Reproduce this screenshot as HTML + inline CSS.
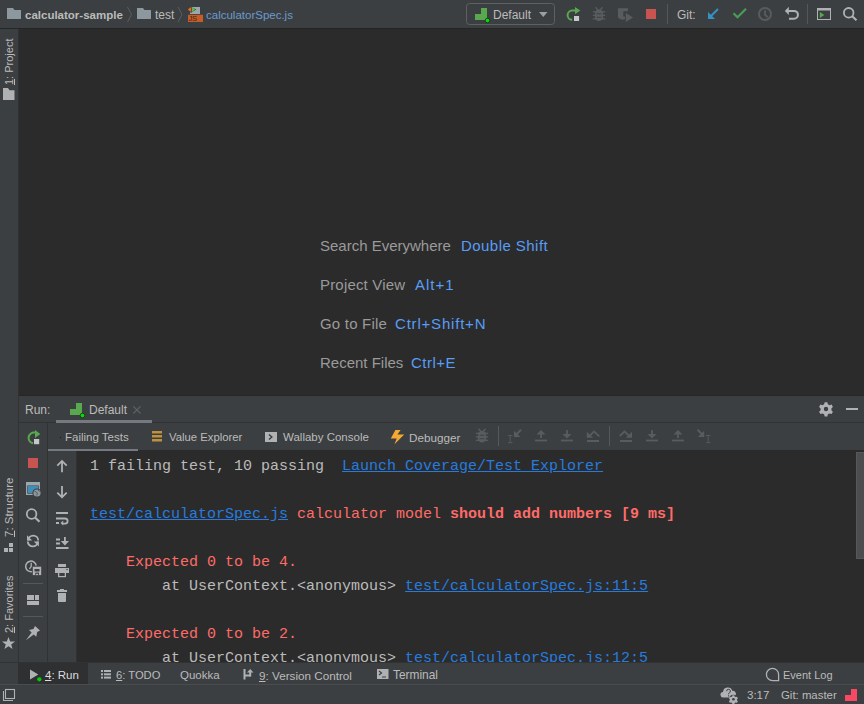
<!DOCTYPE html>
<html><head><meta charset="utf-8">
<style>
*{margin:0;padding:0;box-sizing:border-box}
html,body{width:864px;height:704px;overflow:hidden;background:#3C3F41}
body{position:relative;font-family:"Liberation Sans",sans-serif;color:#BBBBBB}
.a{position:absolute}
.t{position:absolute;white-space:pre;line-height:1;font-size:12px}
.m{position:absolute;white-space:pre;font-family:"Liberation Mono",monospace;font-size:15px;line-height:24px}
svg{position:absolute;overflow:visible}
</style></head><body>

<!-- ===== top nav bar ===== -->

<div class="a" style="left:0;top:0;width:864px;height:28px;background:#3C3F41"></div>
<div class="a" style="left:0;top:28px;width:864px;height:1px;background:#252525"></div>

<!-- ===== left stripe ===== -->
<div class="a" style="left:0;top:29px;width:18px;height:634px;background:#3C3F41"></div>
<div class="a" style="left:18px;top:29px;width:1px;height:634px;background:#323232"></div>

<!-- ===== editor ===== -->
<div class="a" style="left:19px;top:29px;width:845px;height:367px;background:#2B2B2B"></div>

<!-- ===== run header ===== -->
<div class="a" style="left:19px;top:395px;width:845px;height:1px;background:#262626"></div>
<div class="a" style="left:19px;top:396px;width:845px;height:26px;background:#3C3F41"></div>
<div class="a" style="left:19px;top:422px;width:845px;height:1px;background:#323232"></div>

<!-- ===== run tool columns ===== -->
<div class="a" style="left:47px;top:423px;width:1px;height:240px;background:#323232"></div>
<div class="a" style="left:48px;top:450px;width:28px;height:213px;background:#3C3F41"></div>
<div class="a" style="left:76px;top:450px;width:1px;height:213px;background:#323232"></div>
<div class="a" style="left:77px;top:450px;width:787px;height:213px;background:#2B2B2B"></div>

<!-- ===== bottom tool bar ===== -->
<!--BOTTOM-->
<!-- ===== CONTENT ===== -->
<!-- folder 1 -->
<svg style="left:0;top:0" width="864" height="28">
<path d="M7 8h6l1.5 2H21v9H7z" fill="#8C979E"/>
<path d="M127.5 7L131.5 14.5L127.5 22" fill="none" stroke="#5A5D60" stroke-width="1"/>
<path d="M137 8h6l1.5 2H151v9H137z" fill="#8C979E"/>
<path d="M178 7L182 14.5L178 22" fill="none" stroke="#5A5D60" stroke-width="1"/>
<!-- js icon -->
<rect x="192" y="7" width="8" height="7" fill="#9AA7B0"/>
<rect x="190" y="12.5" width="3" height="1.5" fill="#9AA7B0"/>
<path d="M191.6 7.3L196.3 9.5L191.6 12.2z" fill="#3C3F41"/>
<path d="M191.1 6.9L187.8 9.5L191.1 12z" fill="#F26522"/>
<path d="M191.8 6.9L195.3 9.5L191.8 12z" fill="#59C13F"/>
<rect x="188" y="14.8" width="15" height="7.2" fill="#C65D27"/>
<!-- combobox -->
<rect x="466.5" y="3.5" width="88" height="21" rx="3" fill="none" stroke="#5E6061"/>
<path d="M481 8h6v12h-12v-6h6z" fill="#59A84F"/>
<circle cx="487.5" cy="20.5" r="2.3" fill="#00E000" stroke="#1F2A1F" stroke-width="0.8"/>
<path d="M539 12h8.5l-4.25 5z" fill="#9C9EA0"/>
<!-- rerun -->
<path d="M575.5 10.6H572.2A4.5 4.5 0 0 0 572.2 19.8" fill="none" stroke="#59A84F" stroke-width="2"/>
<path d="M575 7L580.3 10.6L575 14.3z" fill="#59A84F"/>
<rect x="573.3" y="15.3" width="6.4" height="6.4" fill="#3C3F41"/>
<rect x="574" y="16" width="5.1" height="5" fill="#C5C7C9"/>
<!-- bug disabled -->
<g fill="#595C5E">
<path d="M599 9.3c2.6 0 4.2 1.9 4.2 5.4v1.8c0 2.8-1.8 4.5-4.2 4.5s-4.2-1.7-4.2-4.5v-1.8c0-3.5 1.6-5.4 4.2-5.4z"/>
<rect x="592.8" y="11.2" width="12.4" height="1.3"/>
<rect x="592.8" y="14.7" width="12.4" height="1.3"/>
<rect x="592.8" y="18.2" width="12.4" height="1.3"/>
<path d="M595.5 7.3l2.2 2.4M602.5 7.3l-2.2 2.4" stroke="#595C5E" stroke-width="1.3"/>
<rect x="596.5" y="13.3" width="5" height="0.9" fill="#3C3F41"/>
<rect x="596.5" y="16.8" width="5" height="0.9" fill="#3C3F41"/>
</g>
<!-- coverage disabled -->
<path d="M618 8.3H628V11.3H623.3V16.5H625V19Q622 21 618 17.5Z" fill="#595C5E"/>
<path d="M625.8 12.9L633 17.5L625.8 22.1Z" fill="#595C5E"/>
<!-- stop -->
<rect x="646" y="9" width="10" height="10" fill="#C75450"/>
<rect x="667" y="4" width="1" height="20" fill="#55585A"/>
<!-- git update arrow -->
<path d="M718 9L711 16" stroke="#3592C4" stroke-width="2"/>
<path d="M708 12V19H715z" fill="#3592C4"/>
<!-- check -->
<path d="M733.5 13.2L737.5 17.2L746 8.8" fill="none" stroke="#499C54" stroke-width="2.2"/>
<!-- clock -->
<circle cx="765" cy="14" r="6" fill="none" stroke="#595C5E" stroke-width="2"/>
<path d="M765 10.3v4.4l2.7 2.4" fill="none" stroke="#595C5E" stroke-width="1.9"/>
<!-- undo -->
<path d="M788 10.9H794A3.95 3.95 0 0 1 794 18.8H789" fill="none" stroke="#AFB1B3" stroke-width="2"/>
<path d="M784.8 10.9L788.8 6.8V15z" fill="#AFB1B3"/>
<rect x="807" y="4" width="1" height="20" fill="#55585A"/>
<!-- run window -->
<rect x="817.5" y="8.5" width="13" height="11" fill="none" stroke="#AFB1B3"/>
<rect x="817" y="8" width="14" height="2.5" fill="#AFB1B3"/>
<path d="M819.8 12.1V17.9L824.3 15z" fill="#59A84F"/>
<!-- search -->
<circle cx="848.7" cy="12.8" r="4.8" fill="none" stroke="#AFB1B3" stroke-width="1.8"/>
<path d="M852.2 16.3l4.3 4" stroke="#AFB1B3" stroke-width="2.2"/>
</svg>
<div class="t" style="left:25px;top:10px;font-size:11.5px;font-weight:bold">calculator-sample</div>
<div class="t" style="left:155px;top:9px">test</div>
<div class="t" style="left:206px;top:10px;font-size:11.5px;color:#6A9BCF">calculatorSpec.js</div>
<div class="t" style="left:188.6px;top:15px;font-size:7.5px;color:#3A2A1E;letter-spacing:-0.3px">JS</div>
<div class="t" style="left:493px;top:9px">Default</div>
<div class="t" style="left:677px;top:9px">Git:</div>

<div class="t" style="left:4px;top:85px;font-size:11px;transform:rotate(-90deg);transform-origin:0 0"><u>1</u>: Project</div>
<div class="t" style="left:3.5px;top:537px;font-size:11.5px;transform:rotate(-90deg);transform-origin:0 0"><u>7</u>: Structure</div>
<div class="t" style="left:3.5px;top:633px;font-size:11px;transform:rotate(-90deg);transform-origin:0 0"><u>2</u>: Favorites</div>
<svg style="left:0;top:0" width="19" height="704">
<path d="M3 88h5l1.5 2.2H14.5V100H3z" fill="#AFB1B3"/>
<rect x="9" y="543" width="4" height="4" fill="#AFB1B3"/>
<rect x="4" y="548" width="4" height="4" fill="#AFB1B3"/>
<rect x="9" y="548" width="4" height="4" fill="#AFB1B3"/>
<path d="M8.5 637L10.2 641.5H15L11.2 644.5L12.6 649L8.5 646.2L4.4 649L5.8 644.5L2 641.5H6.8z" fill="#AFB1B3"/>
</svg>

<div class="t" style="left:320px;top:238px;font-size:15px;color:#9A9A9A">Search Everywhere</div>
<div class="t" style="left:461px;top:238px;font-size:15px;color:#589DF6;letter-spacing:0.45px">Double Shift</div>
<div class="t" style="left:320px;top:277px;font-size:15px;color:#9A9A9A;letter-spacing:0.18px">Project View</div>
<div class="t" style="left:415px;top:277px;font-size:15px;color:#589DF6;letter-spacing:1px">Alt+1</div>
<div class="t" style="left:320px;top:316px;font-size:15px;color:#9A9A9A;letter-spacing:0.2px">Go to File</div>
<div class="t" style="left:395px;top:316px;font-size:15px;color:#589DF6;letter-spacing:0.8px">Ctrl+Shift+N</div>
<div class="t" style="left:320px;top:355px;font-size:15px;color:#9A9A9A">Recent Files</div>
<div class="t" style="left:411px;top:355px;font-size:15px;color:#589DF6;letter-spacing:0.5px">Ctrl+E</div>

<div class="t" style="left:25px;top:404px">Run:</div>
<svg style="left:0;top:0" width="864" height="704">
<path d="M76 403h6v12h-12v-6h6z" fill="#59A84F"/>
<circle cx="82.5" cy="415.5" r="2.3" fill="#00E000" stroke="#1F2A1F" stroke-width="0.8"/>
<path d="M133.3 406.3l7.2 7.2M140.5 406.3l-7.2 7.2" stroke="#5E6163" stroke-width="1.2"/>
<rect x="56" y="420" width="96" height="3" fill="#747A80"/>
<!-- gear -->
<g transform="translate(826 409)">
<path fill="#AFB1B3" d="M-1.3 -6.8h2.6l0.6 2.1 1.6 0.9 2.1-0.6 1.3 2.3-1.5 1.5v1.8l1.5 1.5-1.3 2.3-2.1-0.6-1.6 0.9-0.6 2.1h-2.6l-0.6-2.1-1.6-0.9-2.1 0.6-1.3-2.3 1.5-1.5v-1.8l-1.5-1.5 1.3-2.3 2.1 0.6 1.6-0.9z"/>
<circle r="2.2" fill="#3C3F41"/>
</g>
<rect x="846" y="408" width="12" height="2" fill="#AFB1B3"/>
</svg>
<div class="t" style="left:89px;top:404px">Default</div>
<!-- tab row -->
<div class="a" style="left:48px;top:449px;width:90px;height:2px;background:#747A80"></div>
<div class="t" style="left:65px;top:432px;font-size:11.5px">Failing Tests</div>
<div class="a" style="left:60px;top:437px;width:1px;height:1px;background:#1A1A1A"></div>
<svg style="left:0;top:0" width="864" height="704">
<rect x="152" y="431" width="10" height="2.5" fill="#BE913C"/>
<rect x="152" y="435" width="10" height="2.5" fill="#BE913C"/>
<rect x="152" y="439" width="10" height="2.5" fill="#BE913C"/>
<rect x="265" y="432" width="12" height="10" fill="#AFB1B3"/>
<path d="M269 434.5l2.8 2.5-2.8 2.5" fill="none" stroke="#3C3F41" stroke-width="1.5"/>
<path d="M395.4 430H400.6L397.5 434.6H404.2L394.5 444.3L396.7 438.6H390.8z" fill="#F4A934"/>
<g fill="#595C5E" transform="translate(-117 421.5)">
<path d="M599 9.3c2.6 0 4.2 1.9 4.2 5.4v1.8c0 2.8-1.8 4.5-4.2 4.5s-4.2-1.7-4.2-4.5v-1.8c0-3.5 1.6-5.4 4.2-5.4z"/>
<rect x="592.8" y="11.2" width="12.4" height="1.3"/>
<rect x="592.8" y="14.7" width="12.4" height="1.3"/>
<rect x="592.8" y="18.2" width="12.4" height="1.3"/>
<path d="M595.5 7.3l2.2 2.4M602.5 7.3l-2.2 2.4" stroke="#595C5E" stroke-width="1.3"/>
<rect x="596.5" y="13.3" width="5" height="0.9" fill="#3C3F41"/>
<rect x="596.5" y="16.8" width="5" height="0.9" fill="#3C3F41"/>
</g>
<rect x="498" y="426" width="1" height="20" fill="#55585A"/>
<rect x="609" y="426" width="1" height="20" fill="#55585A"/>
<g fill="#595C5E" stroke="#595C5E">
<!-- arrow to cursor left -->
<path d="M521 429.8l-5 5" stroke-width="2" fill="none"/>
<path d="M514 430.8v6.3h6.3z" stroke="none"/>
<path d="M508 435.5h4.5M510.2 435.5v7.2M508 442.7h4.5" stroke-width="0.9" fill="none"/>
<!-- upload -->
<path d="M535 440.5h12" stroke-width="1.8"/>
<path d="M541 438v-7" stroke-width="1.8"/>
<path d="M536.5 434.5l4.5-4.5 4.5 4.5z" stroke="none"/>
<!-- download -->
<path d="M561 440.5h12" stroke-width="1.8"/>
<path d="M567 430v7" stroke-width="1.8"/>
<path d="M562.5 434l4.5 4.5 4.5-4.5z" stroke="none"/>
<!-- return up -->
<path d="M587 441h12" stroke-width="2"/>
<path d="M589.5 436l4.5-4.6 5.3 5" stroke-width="1.8" fill="none"/>
<path d="M586.8 431.7v6h6.2z" stroke="none"/>
<!-- return down -->
<path d="M620 441h12" stroke-width="2"/>
<path d="M619.8 436l4.8-4.6 5 5" stroke-width="1.8" fill="none"/>
<path d="M632 431.7v6h-6.2z" stroke="none"/>
<!-- download 2 -->
<path d="M646 440.5h12" stroke-width="1.8"/>
<path d="M652 430v7" stroke-width="1.8"/>
<path d="M647.5 434l4.5 4.5 4.5-4.5z" stroke="none"/>
<!-- upload 2 -->
<path d="M672 440.5h12" stroke-width="1.8"/>
<path d="M678 438v-7" stroke-width="1.8"/>
<path d="M673.5 434.5l4.5-4.5 4.5 4.5z" stroke="none"/>
<!-- arrow to cursor right -->
<path d="M697.5 429.8l5 5" stroke-width="2" fill="none"/>
<path d="M704.2 430.8v6.3h-6.3z" stroke="none"/>
<path d="M706 435.5h4.5M708.2 435.5v7.2M706 442.7h4.5" stroke-width="0.9" fill="none"/>
</g>
</svg>
<div class="t" style="left:169px;top:432px;font-size:11.3px">Value Explorer</div>
<div class="t" style="left:283px;top:432px;font-size:11.5px">Wallaby Console</div>
<div class="t" style="left:409px;top:432px;font-size:11.7px">Debugger</div>

<svg style="left:0;top:0" width="864" height="704">
<!-- col1 -->
<path d="M35 432.6A5.3 5.3 0 1 0 33 443.3" fill="none" stroke="#59A84F" stroke-width="2"/>
<path d="M35 430l5.3 4-5.3 4z" fill="#59A84F"/>
<rect x="34" y="439" width="5.2" height="5.2" fill="#C5C7C9"/>
<rect x="28" y="458" width="10" height="10" fill="#C75450"/>
<!-- screen globe -->
<rect x="26" y="482" width="14" height="13" fill="#9AA7B0"/>
<rect x="27.3" y="485.5" width="11.4" height="8.2" fill="#3C3F41"/>
<rect x="28" y="486" width="10" height="7" fill="#3D8FB8"/>
<circle cx="37" cy="493" r="4.6" fill="#3C3F41"/>
<circle cx="37" cy="493" r="3.6" fill="#8C969C"/>
<path d="M34.5 491.5l2 0.5 1 2-1.2 1.5M38 490l1.5 1.5" stroke="#4A4F52" stroke-width="0.8" fill="none"/>
<!-- search -->
<circle cx="31.6" cy="514" r="4.8" fill="none" stroke="#AFB1B3" stroke-width="1.8"/>
<path d="M35 517.5l4.5 4.2" stroke="#AFB1B3" stroke-width="2.2"/>
<!-- refresh -->
<path d="M28.3 540.5A4.95 4.95 0 0 1 38.2 540.5" fill="none" stroke="#AFB1B3" stroke-width="1.8"/>
<path d="M27 535.2V540.4H32.2z" fill="#AFB1B3"/>
<path d="M37.7 541.5A4.95 4.95 0 0 1 27.8 541.5" fill="none" stroke="#AFB1B3" stroke-width="1.8"/>
<path d="M38.9 546.6V541.4H33.7z" fill="#AFB1B3"/>
<!-- clock save -->
<path d="M36.2 565.5A5.3 5.3 0 1 0 31.92 571.62" fill="none" stroke="#AFB1B3" stroke-width="1.5"/>
<path d="M31.2 562.8V566.6L29.4 568.8" fill="none" stroke="#AFB1B3" stroke-width="1.3"/>
<rect x="32.8" y="566.7" width="8.4" height="8.4" fill="#AFB1B3"/>
<rect x="34.5" y="569" width="5" height="2.5" fill="#3C3F41"/>
<rect x="35.3" y="572.6" width="3.7" height="2.6" fill="#3C3F41"/>
<rect x="36.1" y="573.8" width="2.1" height="1.3" fill="#AFB1B3"/>
<rect x="23" y="583" width="20" height="1" fill="#555759"/>
<!-- layout -->
<rect x="27" y="595" width="7" height="5" fill="#AFB1B3"/>
<rect x="35" y="595" width="4" height="5" fill="#AFB1B3"/>
<rect x="27" y="601" width="12" height="4" fill="#AFB1B3"/>
<rect x="23" y="616" width="20" height="1" fill="#555759"/>
<!-- pin -->
<path d="M35 626l5 4.5-2.8 1.5-1 4.8-2.5-2.4L26 640.2l5.6-7.7-2.6-2.6 4.5-1z" fill="#AFB1B3"/>
<!-- col2 -->
<g stroke="#AFB1B3" fill="none" stroke-width="1.8">
<path d="M62 461v11.2M57.3 465.6l4.7-4.7 4.7 4.7"/>
<path d="M62 486v11.2M57.3 492.6l4.7 4.7 4.7-4.7"/>
</g>
<g fill="#AFB1B3">
<rect x="56" y="512" width="12" height="2"/>
<rect x="56" y="517.5" width="9" height="2"/>
<rect x="56" y="522" width="3" height="2"/>
<path d="M65 518.5a2.6 2.6 0 0 1 0 5.2h-2" fill="none" stroke="#AFB1B3" stroke-width="1.8"/>
<path d="M60.5 523l2.7-2.5v5z"/>
<rect x="56" y="538.5" width="4" height="2"/>
<rect x="56" y="542.5" width="4" height="2"/>
<rect x="56" y="547" width="12.5" height="2"/>
<rect x="64" y="537" width="1.8" height="6"/>
<path d="M60.8 541h8.2l-4.1 4.6z"/>
<!-- printer -->
<rect x="58" y="564" width="8" height="3"/>
<rect x="55" y="568" width="14" height="5"/>
<rect x="58" y="572" width="8" height="5.2"/>
<rect x="59.3" y="573" width="5.4" height="3" fill="#3C3F41"/>
<circle cx="67" cy="569.5" r="0.7" fill="#3C3F41"/>
<!-- trash -->
<rect x="57" y="590" width="10" height="2"/>
<rect x="60" y="589" width="4" height="1.5"/>
<path d="M58 593h8v8a1 1 0 0 1 -1 1h-6a1 1 0 0 1 -1 -1z"/>
</g>
</svg>

<div class="m" style="left:90px;top:455px;color:#BBBBBB">1 failing test, 10 passing  <u style="color:#287BDE">Launch Coverage/Test Explorer</u></div>
<div class="m" style="left:90px;top:503px;color:#FF6B68"><u style="color:#287BDE">test/calculatorSpec.js</u> calculator model <b>should add numbers [9 ms]</b></div>
<div class="m" style="left:90px;top:551px;color:#FF6B68">    Expected 0 to be 4.</div>
<div class="m" style="left:90px;top:575px;color:#BBBBBB">        at UserContext.&lt;anonymous&gt; <u style="color:#287BDE">test/calculatorSpec.js:11:5</u></div>
<div class="m" style="left:90px;top:623px;color:#FF6B68">    Expected 0 to be 2.</div>
<div class="a" style="left:77px;top:646px;width:787px;height:17px;overflow:hidden"><div class="m" style="left:13px;top:1px;color:#BBBBBB">        at UserContext.&lt;anonymous&gt; <u style="color:#287BDE">test/calculatorSpec.js:12:5</u></div></div>
<div class="a" style="left:856px;top:452px;width:8px;height:107px;background:#4B4D4E;border:1px solid #56595A;border-right:none"></div>

<div class="a" style="left:18px;top:663px;width:70px;height:21px;background:#2E3032"></div>
<svg style="left:0;top:0" width="864" height="704">
<path d="M30 669.5v10l8.3-5z" fill="#AFB1B3"/>
<circle cx="39.3" cy="679.3" r="2.1" fill="#00D000"/>
<g fill="#AFB1B3">
<rect x="101" y="670" width="2" height="2"/><rect x="104" y="670" width="7" height="2"/>
<rect x="101" y="673.3" width="2" height="2"/><rect x="104" y="673.3" width="7" height="2"/>
<rect x="101" y="676.6" width="2" height="2"/><rect x="104" y="676.6" width="7" height="2"/>
<!-- vcs -->
<rect x="243.5" y="669" width="2" height="10.5"/>
<rect x="245" y="674.5" width="5.5" height="2"/>
<rect x="249.2" y="672" width="2" height="4.5"/>
<path d="M247 672.5l3.2-3.5 3.3 3.5z"/>
<!-- terminal -->
<rect x="377" y="669" width="11.5" height="10"/>
<!-- status bar icon -->
<path d="M3.5 691v9.5H13" fill="none" stroke="#AFB1B3" stroke-width="1.1"/>
<rect x="5.5" y="689.5" width="9" height="9" fill="none" stroke="#AFB1B3" stroke-width="1.1"/>
</g>
<path d="M379 671l2.5 2-2.5 2M382 677h4" fill="none" stroke="#3C3F41" stroke-width="1.2"/>
<!-- event log bubble -->
<path d="M778.6 674.4V680.6H772.5A6.1 6.1 0 1 1 778.6 674.4z" fill="none" stroke="#AFB1B3" stroke-width="1.3"/>
<!-- cloud ? gear -->
<path d="M723.5 697.5a2.8 2.8 0 0 1 -0.5-5.6a4.8 4.8 0 0 1 9.3-1.2a3.4 3.4 0 0 1 3.5 4.5l-4 2.3z" fill="#AFB1B3"/>
<path d="M726.6 691.2a1.9 1.9 0 1 1 2.5 1.8c-0.6 0.3-0.6 0.7-0.6 1.3" fill="none" stroke="#3C3F41" stroke-width="1"/>
<rect x="728" y="695.3" width="1.1" height="1.1" fill="#3C3F41"/>
<g transform="translate(733.4 699.3)">
<circle r="4.6" fill="#3C3F41"/>
<path fill="#AFB1B3" d="M-0.9 -4h1.8l0.4 1.2 1 0.6 1.3-0.3 0.9 1.5-0.9 1v1l0.9 1-0.9 1.5-1.3-0.3-1 0.6-0.4 1.2h-1.8l-0.4-1.2-1-0.6-1.3 0.3-0.9-1.5 0.9-1v-1l-0.9-1 0.9-1.5 1.3 0.3 1-0.6z"/>
<circle r="1.3" fill="#3C3F41"/>
</g>
<path d="M845 695h6v-6h6v12h-12z" fill="#F84864"/>
</svg>
<div class="t" style="left:45px;top:670px;font-size:11.5px;color:#DDDDDD"><u>4</u>: Run</div>
<div class="t" style="left:116px;top:670px;font-size:11.2px"><u>6</u>: TODO</div>
<div class="t" style="left:180px;top:670px;font-size:11.5px">Quokka</div>
<div class="t" style="left:259px;top:670px;font-size:11.7px"><u>9</u>: Version Control</div>
<div class="t" style="left:393px;top:670px;font-size:11.9px">Terminal</div>
<div class="t" style="left:783px;top:670px;font-size:11px">Event Log</div>
<div class="t" style="left:747px;top:690px;font-size:11.5px">3:17</div>
<div class="t" style="left:781px;top:690px;font-size:11.4px">Git: master</div>


<div class="a" style="left:0;top:662px;width:864px;height:1px;background:#323232"></div>
<div class="a" style="left:0;top:684px;width:864px;height:1px;background:#4A4D4F"></div>

</body></html>
